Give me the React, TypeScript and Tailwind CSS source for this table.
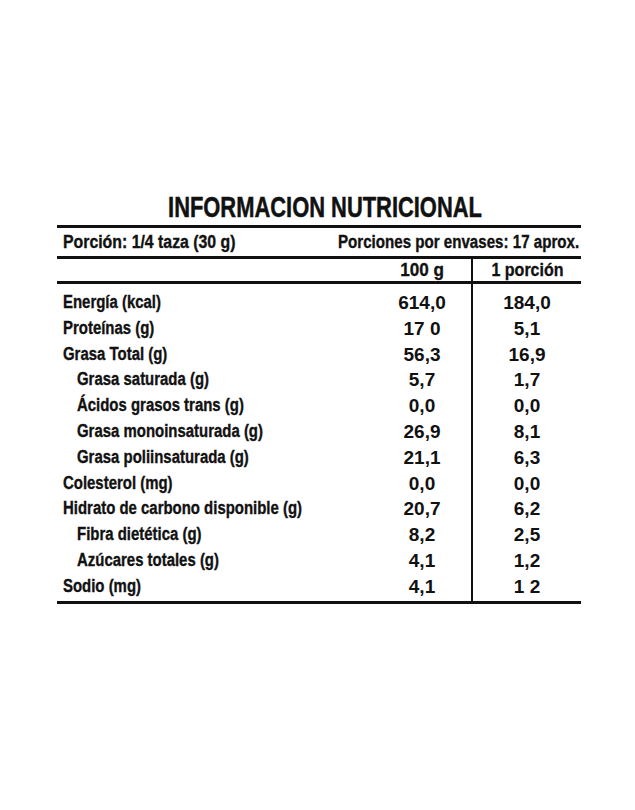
const rows: { label: string; a: string; b: string; indent?: boolean }[] = [
  { label: 'Energía (kcal)', a: '614,0', b: '184,0' },
  { label: 'Proteínas (g)', a: '17 0', b: '5,1' },
  { label: 'Grasa Total (g)', a: '56,3', b: '16,9' },
  { label: 'Grasa saturada (g)', a: '5,7', b: '1,7', indent: true },
  { label: 'Ácidos grasos trans (g)', a: '0,0', b: '0,0', indent: true },
  { label: 'Grasa monoinsaturada (g)', a: '26,9', b: '8,1', indent: true },
  { label: 'Grasa poliinsaturada (g)', a: '21,1', b: '6,3', indent: true },
  { label: 'Colesterol (mg)', a: '0,0', b: '0,0' },
  { label: 'Hidrato de carbono disponible (g)', a: '20,7', b: '6,2' },
  { label: 'Fibra dietética (g)', a: '8,2', b: '2,5', indent: true },
  { label: 'Azúcares totales (g)', a: '4,1', b: '1,2', indent: true },
  { label: 'Sodio (mg)', a: '4,1', b: '1 2' },
];

// Liberation Sans squeezed horizontally to get the condensed label look
const font = { fontFamily: '"Liberation Sans", Arial, sans-serif' };

export default function App() {
  return (
    <div className="w-[635px] h-[810px] bg-white text-[#111] pt-[192px] font-bold" style={font}>
      <h1 className="text-center text-[30px] leading-[30px] pl-[14px] whitespace-nowrap [-webkit-text-stroke:0.5px_#111]">
        <span className="inline-block scale-x-[0.73]">INFORMACION NUTRICIONAL</span>
      </h1>

      <div className="ml-[57px] w-[524px] mt-[3px]">
        {/* Porción */}
        <div className="flex items-center justify-between h-[34px] border-t-[3px] border-b-[3px] border-[#111] pl-[6px] pr-[2px] text-[18px] whitespace-nowrap [-webkit-text-stroke:0.35px_#111]">
          <span className="inline-block scale-x-[0.88] origin-left">Porción: 1/4 taza (30 g)</span>
          <span className="inline-block scale-x-[0.84] origin-right">Porciones por envases: 17 aprox.</span>
        </div>

        {/* Header */}
        <div className="flex h-[25px] border-b-[3px] border-[#111] text-[18px] leading-[22px] whitespace-nowrap [-webkit-text-stroke:0.3px_#111]">
          <div className="flex-1" />
          <div className="w-[98px] text-center">
            <span className="inline-block scale-x-[0.95]">100 g</span>
          </div>
          <div className="w-[110px] border-l-2 border-[#111] text-center pl-[2px]">
            <span className="inline-block scale-x-[0.89]">1 porción</span>
          </div>
        </div>

        {/* Body */}
        <div className="flex border-b-[3px] border-[#111] whitespace-nowrap">
          <div className="flex-1 pt-[6px] pb-[1px] text-[18px] [-webkit-text-stroke:0.35px_#111]">
            {rows.map((r) => (
              <div key={r.label} className={`h-[25.8px] leading-[25.8px] ${r.indent ? 'pl-[20px]' : 'pl-[6px]'}`}>
                <span className="inline-block scale-x-[0.83] origin-left">{r.label}</span>
              </div>
            ))}
          </div>
          <div className="w-[98px] pt-[6px] pb-[1px] text-[19px]">
            {rows.map((r) => (
              <div key={r.label} className="h-[25.8px] leading-[25.8px] text-center">
                {r.a}
              </div>
            ))}
          </div>
          <div className="w-[110px] border-l-2 border-[#111] pt-[6px] pb-[1px] text-[19px]">
            {rows.map((r) => (
              <div key={r.label} className="h-[25.8px] leading-[25.8px] text-center">
                {r.b}
              </div>
            ))}
          </div>
        </div>
      </div>
    </div>
  );
}
